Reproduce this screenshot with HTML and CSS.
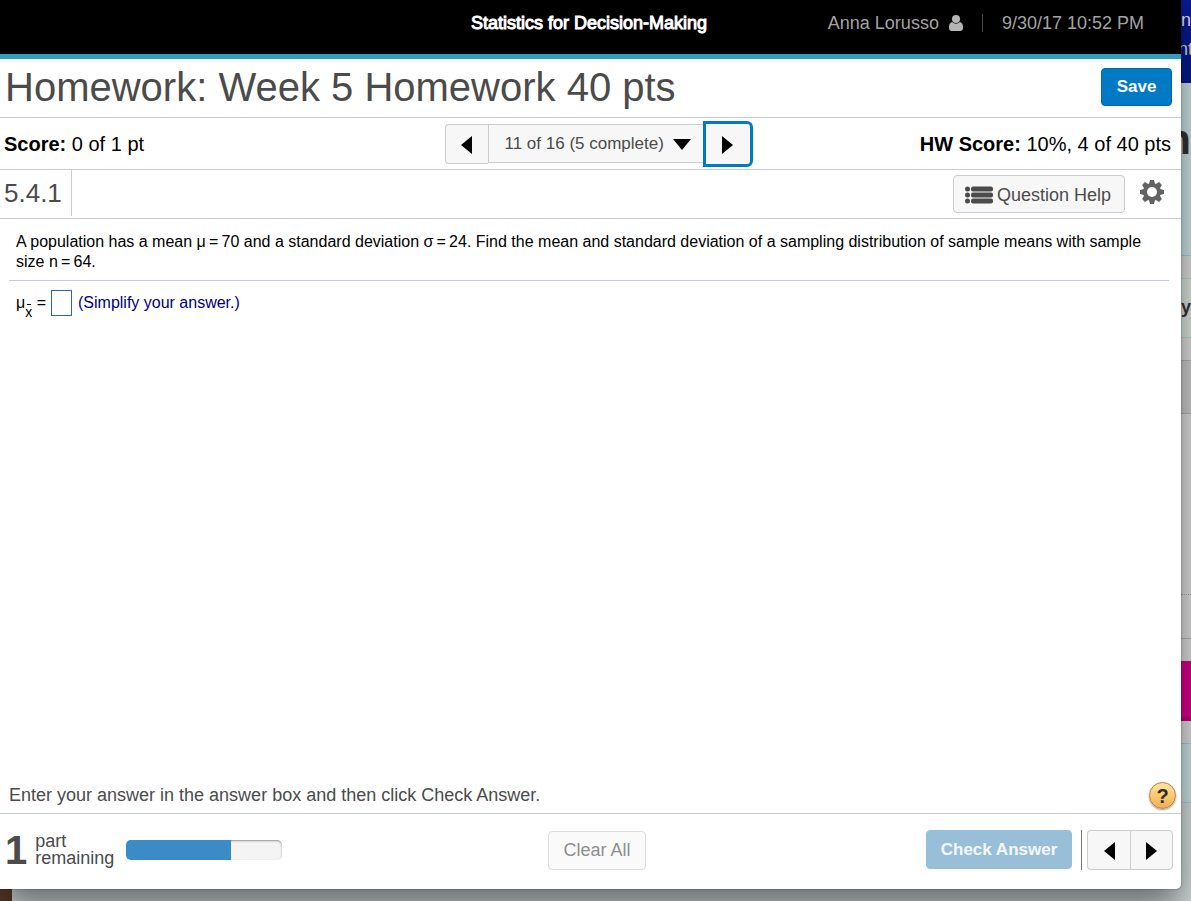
FILE: index.html
```html
<!DOCTYPE html>
<html lang="en">
<head>
    <meta charset="UTF-8">
    <meta name="viewport" content="width=device-width, initial-scale=1.0">
    <title>Homework: Week 5 Homework 40 pts</title>
    <link rel="stylesheet" href="styles.css">
</head>
<body>
    <div class="desktop">
        <div class="window">
            <header class="top-bar">
                <div class="course">Statistics for Decision-Making</div>
                <div class="user">
                    <span>Anna Lorusso</span>
                    <svg class="user-icon" width="14" height="16" viewBox="0 0 14 16"><circle cx="7" cy="4" r="4"/><path d="M3 7Q7 10.500 11 7Q14 8 14 12V13Q14 16 11 16H3Q0 16 0 13V12Q0 8 3 7Z"/></svg>
                    <span class="user-divider"></span>
                    <span>9/30/17 10:52 PM</span>
                </div>
            </header>

            <div class="title-row">
                <h1>Homework: Week 5 Homework 40 pts</h1>
                <button class="btn btn-primary save">Save</button>
            </div>

            <div class="score-row">
                <div class="score"><b>Score:</b> 0 of 1 pt</div>
                <nav class="question-nav">
                    <button class="btn nav-prev" aria-label="Previous question"><svg width="11" height="18" viewBox="0 0 11 18"><path d="M11 0V18L0 9Z"/></svg></button>
                    <div class="nav-select">
                        <select aria-label="Question">
                            <option>11 of 16 (5 complete)</option>
                        </select>
                        <svg width="18" height="11" viewBox="0 0 18 11"><path d="M0 0H18L9 11Z"/></svg>
                    </div>
                    <button class="btn nav-next" aria-label="Next question"><svg width="11" height="18" viewBox="0 0 11 18"><path d="M0 0V18L11 9Z"/></svg></button>
                </nav>
                <div class="score hw-score"><b>HW Score:</b> 10%, 4 of 40 pts</div>
            </div>

            <div class="tool-row">
                <div class="section-number">5.4.1</div>
                <div class="tools">
                    <button class="btn question-help">
                        <svg width="28" height="18" viewBox="0 0 28 18"><circle cx="2.500" cy="3" r="2.500"/><circle cx="2.500" cy="9" r="2.500"/><circle cx="2.500" cy="15" r="2.500"/><rect x="6" y="0.500" width="22" height="5" rx="2"/><rect x="6" y="6.500" width="22" height="5" rx="2"/><rect x="6" y="12.500" width="22" height="5" rx="2"/></svg>
                        Question Help
                    </button>
                    <button class="settings" aria-label="Settings">
                        <svg width="24" height="24" viewBox="-12 -12 24 24">
                            <circle r="7" fill="none" stroke="#636363" stroke-width="4"/>
                            <g id="teeth">
                                <path d="M-3 -8L-2 -12H2L3 -8ZM-3 8L-2 12H2L3 8ZM-8 -3L-12 -2V2L-8 3ZM8 -3L12 -2V2L8 3Z"/>
                            </g>
                            <use href="#teeth" transform="rotate(45)"/>
                        </svg>
                    </button>
                </div>
            </div>

            <main class="content">
                <p class="question">A population has a mean &mu;&thinsp;=&thinsp;70 and a standard deviation &sigma;&thinsp;=&thinsp;24. Find the mean and standard deviation of a sampling distribution of sample means with sample size n&thinsp;=&thinsp;64.</p>
                <div class="answer">
                    <label for="answerBox">&mu;<sub><span class="x-bar">x</span></sub> =</label>
                    <input type="text" id="answerBox">
                    <span class="answer-note">(Simplify your answer.)</span>
                </div>
            </main>

            <div class="hint-row">
                <p>Enter your answer in the answer box and then click Check Answer.</p>
                <button class="help" aria-label="Help">?</button>
            </div>

            <footer class="bottom-bar">
                <div class="parts">
                    <span class="parts-count">1</span>
                    <span class="parts-label">part<br>remaining</span>
                    <div class="progress"><div class="progress-fill" style="width: 67%"></div></div>
                </div>
                <button class="btn clear-all" disabled>Clear All</button>
                <div class="check">
                    <button class="btn btn-primary check-answer" disabled>Check Answer</button>
                    <div class="part-nav">
                        <button class="btn nav-prev" aria-label="Previous part"><svg width="11" height="18" viewBox="0 0 11 18"><path d="M11 0V18L0 9Z"/></svg></button>
                        <button class="btn part-next" aria-label="Next part"><svg width="11" height="18" viewBox="0 0 11 18"><path d="M0 0V18L11 9Z"/></svg></button>
                    </div>
                </div>
            </footer>
        </div>

        <!-- page left open behind the window -->
        <div class="behind" aria-hidden="true">
            <div class="behind-menu"><span>n</span><span class="behind-link">nt</span></div>
            <div class="behind-banner">n</div>
            <div class="behind-gap"></div>
            <div class="behind-note">y</div>
            <div class="behind-gap"></div>
            <div class="behind-tab"></div>
            <div class="behind-body"></div>
            <div class="behind-line"></div>
            <div class="behind-gap"></div>
            <div class="behind-pink"></div>
            <div class="behind-gap"></div>
            <div class="behind-box"></div>
        </div>
        <div class="behind-bottom"></div>
    </div>
</body>
</html>
```
FILE: styles.css
```css
* {
    box-sizing: border-box;
}

body {
    margin: 0;
    font-family: "Liberation Sans", Arial, Helvetica, sans-serif;
    font-size: 18px;
    color: #4b4b4b;
}

h1, p {
    margin: 0;
    font-weight: normal;
}

button, select, input {
    font: inherit;
    color: inherit;
    margin: 0;
    padding: 0;
}

.desktop {
    display: grid;
    grid-template-columns: 1fr 10px;
    grid-template-rows: 1fr 12px;
    height: 100vh;
    overflow: hidden;
    background: #d3dbdb;
}

.window {
    grid-column: 1;
    grid-row: 1;
    z-index: 1;
    display: flex;
    flex-direction: column;
    background: #fff;
    border-radius: 0 0 5px 0;
    box-shadow: 0 0 2px rgba(0,0,0,0.4), 0 20px 36px rgba(0,0,0,0.5);
}

/* Buttons */
.btn {
    display: flex;
    align-items: center;
    justify-content: center;
    background: #f7f7f7;
    border: 1px solid #ccc;
    border-radius: 4px;
}

.btn-primary {
    background: #007ac5;
    border-color: #0069ab;
    color: #fff;
    font-size: 17px;
    font-weight: bold;
}

/* Header */
.top-bar {
    display: flex;
    justify-content: space-between;
    align-items: center;
    height: 59px;
    padding: 0 37px 8px 471px;
    background: #000;
    border-bottom: 5px solid #2f9fbc;
}

.course {
    color: #fff;
    -webkit-text-stroke: 1px #fff;
}

.user {
    display: flex;
    align-items: center;
    color: #a3a3a3;
}

.user-icon {
    margin-left: 10px;
    fill: #b5b5b5;
}

.user-divider {
    width: 1px;
    height: 18px;
    margin: 0 19px;
    background: #4b4b4b;
}

.title-row {
    display: flex;
    align-items: center;
    justify-content: space-between;
    height: 59px;
    padding: 0 9px 2px 5px;
    border-bottom: 1px solid #c8ccd8;
}

.title-row h1 {
    font-size: 40px;
    line-height: 46px;
}

.save {
    width: 71px;
    height: 38px;
}

/* Score and question navigation */
.score-row {
    display: grid;
    grid-template-columns: 1fr auto 1fr;
    align-items: center;
    height: 52px;
    padding: 0 10px 0 4px;
    border-bottom: 1px solid #c8ccd8;
}

.score {
    padding-top: 2px;
    color: #000;
    font-size: 20px;
}

.hw-score {
    text-align: right;
}

.question-nav {
    display: flex;
    align-items: center;
    margin-left: 22px;
}

.question-nav .btn {
    padding-top: 2px;
}

.nav-prev {
    width: 43px;
    height: 40px;
    border-right: 0;
    border-radius: 4px 0 0 4px;
}

.nav-select {
    position: relative;
}

.nav-select select {
    width: 215px;
    height: 39px;
    padding: 0 34px 0 16px;
    appearance: none;
    background: #f7f7f7;
    border: 1px solid #ccc;
    border-right: 0;
    border-radius: 0;
    font-size: 17px;
}

.nav-select svg {
    position: absolute;
    right: 12px;
    top: 15px;
    pointer-events: none;
}

.nav-next {
    width: 50px;
    height: 46px;
    border: 3px solid #007ac5;
    border-radius: 0 6px 6px 0;
}

.tool-row {
    display: flex;
    justify-content: space-between;
    height: 49px;
    border-bottom: 1px solid #c8ccd8;
}

.section-number {
    height: 46px;
    padding: 0 9px 0 4px;
    border-right: 1px solid #c8ccd8;
    font-size: 26px;
    line-height: 46px;
}

.tools {
    display: flex;
    align-items: center;
    padding-right: 17px;
}

.question-help {
    gap: 4px;
    width: 172px;
    height: 38px;
    padding: 2px 2px 0 0;
}

.question-help svg {
    fill: #4b4b4b;
}

.settings {
    display: flex;
    margin-left: 15px;
    padding-bottom: 4px;
    background: none;
    border: 0;
}

.settings svg {
    fill: #636363;
}

/* Question */
.content {
    flex: 1;
    padding: 13px 12px 0 9px;
    color: #000;
    font-size: 16px;
}

.question {
    padding: 0 0 8px 7px;
    border-bottom: 1px solid #c8ccd8;
    line-height: 20px;
}

.answer {
    display: flex;
    align-items: center;
    padding: 9px 7px;
}

.answer sub {
    font-size: 14px;
    line-height: 0;
    vertical-align: -9px;
}

/* short bar above the x */
.x-bar {
    display: inline-block;
    height: 18px;
    line-height: 22px;
    margin: -6px 0;
    background: linear-gradient(#000, #000) center top 3px / 4px 1px no-repeat;
}

.answer input {
    width: 21px;
    height: 26px;
    margin: 0 6px 0 5px;
    border: 1px solid #2b62c9;
}

.answer-note {
    color: #000080;
}

.hint-row {
    display: flex;
    align-items: center;
    justify-content: space-between;
    height: 36px;
    padding: 0 5px 0 9px;
    border-bottom: 1px solid #c8ccd8;
}

.help {
    width: 27px;
    height: 27px;
    background: linear-gradient(#ffe4a0, #f5ae4b);
    border: 1px solid #b08040;
    border-radius: 50%;
    box-shadow: 0 1px 2px rgba(0,0,0,0.4);
    color: #2b2b2b;
    font-size: 20px;
    font-weight: bold;
    line-height: 24px;
}

/* Footer */
.bottom-bar {
    display: grid;
    grid-template-columns: 1fr auto 1fr;
    align-items: center;
    height: 75px;
    padding: 0 8px 3px 5px;
}

.parts {
    display: flex;
    align-items: center;
}

.parts-count {
    font-size: 40px;
    font-weight: bold;
}

.parts-label {
    margin-left: 8px;
    line-height: 17px;
}

.progress {
    width: 156px;
    height: 20px;
    margin-left: 12px;
    overflow: hidden;
    background: #f4f4f4;
    border-radius: 5px;
    box-shadow: inset 0 1px 2px rgba(0,0,0,0.4);
}

.progress-fill {
    height: 100%;
    background: #3a8bc6;
}

.clear-all {
    width: 98px;
    height: 39px;
    margin-left: 16px;
    background: #fafafa;
    border-color: #ddd;
    color: #8f8f8f;
}

.check {
    display: flex;
    justify-content: flex-end;
}

.check-answer {
    width: 146px;
    height: 39px;
    background: #99bfd8;
    border-color: #99bfd8;
    color: #f2f7fa;
}

.part-nav {
    display: flex;
    margin-left: 9px;
    padding-left: 5px;
    border-left: 1px solid #777;
}

.part-nav .btn {
    padding-top: 2px;
}

.part-next {
    width: 43px;
    height: 40px;
    border-radius: 0 4px 4px 0;
}

/* Page behind the window */
.behind {
    grid-column: 2;
    grid-row: 1 / 3;
    overflow: hidden;
    color: #333;
}

.behind-menu {
    display: flex;
    flex-direction: column;
    height: 83px;
    padding-top: 6px;
    background: #071a8c;
    color: #ddd;
    font-size: 18px;
    line-height: 29px;
}

.behind-link {
    text-indent: -3px;
}

.behind-banner {
    height: 173px;
    padding-top: 36px;
    background: #cfe3e6;
    border-bottom: 1px solid #9fd4de;
    font-size: 42px;
    font-weight: bold;
    line-height: 42px;
    direction: rtl;
}

.behind-gap {
    height: 22px;
    background: #dedede;
}

.behind-note {
    height: 60px;
    background: #dce4dd;
    border-top: 1px solid #b5dcc5;
    border-bottom: 1px solid #b5dcc5;
    font-size: 18px;
    font-weight: bold;
    line-height: 56px;
}

.behind-tab {
    height: 54px;
    background: #cdcdcd;
    border-top: 1px solid #b5b5b5;
    border-bottom: 1px solid #b5b5b5;
}

.behind-body {
    height: 181px;
    background: #dedede;
    border-bottom: 1px dotted #aaa;
}

.behind-line {
    height: 44px;
    background: #dedede;
    border-bottom: 1px solid #b5b5b5;
}

.behind-pink {
    height: 60px;
    background: #d8008a;
    border-bottom: 4px solid #bb0078;
}

.behind-box {
    height: 60px;
    background: #cfe3e6;
    border-top: 1px solid #9fd4de;
    border-bottom: 1px solid #9fd4de;
}

.behind-bottom {
    grid-column: 1;
    grid-row: 2;
    border-left: 12px solid #5a3b28;
}
```
